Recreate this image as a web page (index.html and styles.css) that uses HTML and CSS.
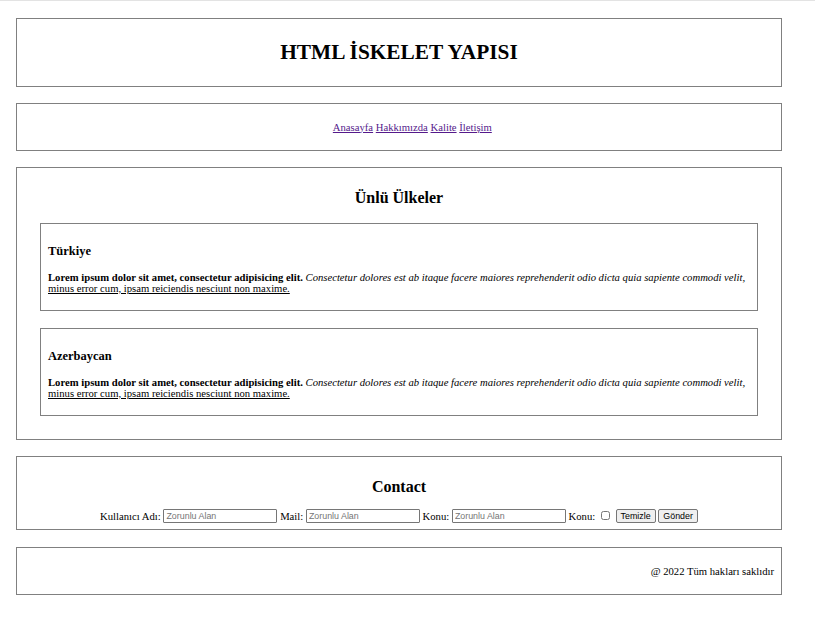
FILE: index.html
```html
<!DOCTYPE html>
<html lang="tr">
<head>
<meta charset="utf-8">
<title>HTML İskelet Yapısı</title>
<link rel="stylesheet" href="styles.css">
</head>
<body>
<div class="topline"></div>
<header class="box header">
  <h1>HTML İSKELET YAPISI</h1>
</header>
<nav class="box nav">
  <p class="menu"><a href="#">Anasayfa</a> <a href="#">Hakkımızda</a> <a href="#">Kalite</a> <a href="#">İletişim</a></p>
</nav>
<main class="box main">
  <h2>Ünlü Ülkeler</h2>
  <article class="box card">
    <h3>Türkiye</h3>
    <p><b>Lorem ipsum dolor sit amet, consectetur adipisicing elit.</b> <i>Consectetur dolores est ab itaque facere maiores reprehenderit odio dicta quia sapiente commodi velit,</i> <u>minus error cum, ipsam reiciendis nesciunt non maxime.</u></p>
  </article>
  <article class="box card">
    <h3>Azerbaycan</h3>
    <p><b>Lorem ipsum dolor sit amet, consectetur adipisicing elit.</b> <i>Consectetur dolores est ab itaque facere maiores reprehenderit odio dicta quia sapiente commodi velit,</i> <u>minus error cum, ipsam reiciendis nesciunt non maxime.</u></p>
  </article>
</main>
<section class="box contact">
  <h2>Contact</h2>
  <form class="form">
    <label>Kullanıcı Adı:</label> <input type="text" class="field" placeholder="Zorunlu Alan">
    <label>Mail:</label> <input type="text" class="field" placeholder="Zorunlu Alan">
    <label>Konu:</label> <input type="text" class="field" placeholder="Zorunlu Alan">
    <label>Konu:</label> <input type="checkbox" class="check">
    <button type="reset" class="btn">Temizle</button>
    <button type="button" class="btn">Gönder</button>
  </form>
</section>
<footer class="box footer">
  <p>@ 2022 Tüm hakları saklıdır</p>
</footer>
</body>
</html>
```
FILE: styles.css
```css
html, body {
  margin: 0;
  padding: 0;
  background: #fff;
}
body {
  font-family: "Liberation Serif", "Times New Roman", serif;
  font-size: 10.67px;
  color: #000;
}
.topline {
  height: 1px;
  background: #e3e3e3;
  margin-bottom: 17px;
}
.box {
  border: 1px solid #808080;
  margin: 0 33px 16px 16px;
  padding: 7px;
  text-align: center;
}
h1 {
  font-size: 21.33px;
  line-height: 25px;
  margin: 14px 0;
}
h2 {
  font-size: 16px;
  line-height: 19px;
  margin: 13px 0;
}
h3 {
  font-size: 12.48px;
  line-height: 15px;
  margin: 12.5px 0 12px;
  text-align: left;
}
p {
  margin: 10.5px 0;
  line-height: 11px;
}
.menu {
  padding-left: 26.67px;
}
.nav a {
  color: #551a8b;
}
.card {
  margin: 16px;
  text-align: left;
}
.card + .card {
  margin-top: 17px;
}
.card p {
  margin: 13px 0 9.5px;
}
.contact {
  padding-bottom: 6px;
  margin-bottom: 17px;
}
.form {
  margin: 0;
  line-height: 14px;
}
.field {
  box-sizing: border-box;
  width: 114px;
  height: 14px;
  padding: 0 2px;
  border: 1px solid #767676;
  border-radius: 1px;
  font-family: "Liberation Sans", Arial, sans-serif;
  font-size: 8.9px;
  vertical-align: top;
  margin: 0;
}
.field::placeholder {
  color: #757575;
}
.check {
  width: 9px;
  height: 9px;
  margin: 2px 3px 0;
  vertical-align: top;
}
.btn {
  box-sizing: border-box;
  height: 14px;
  padding: 0 4px;
  border: 1px solid #767676;
  border-radius: 2px;
  background: #efefef;
  font-family: "Liberation Sans", Arial, sans-serif;
  font-size: 8.9px;
  line-height: 12px;
  color: #000;
  vertical-align: top;
  margin: 0;
}
.footer {
  text-align: right;
}
```
